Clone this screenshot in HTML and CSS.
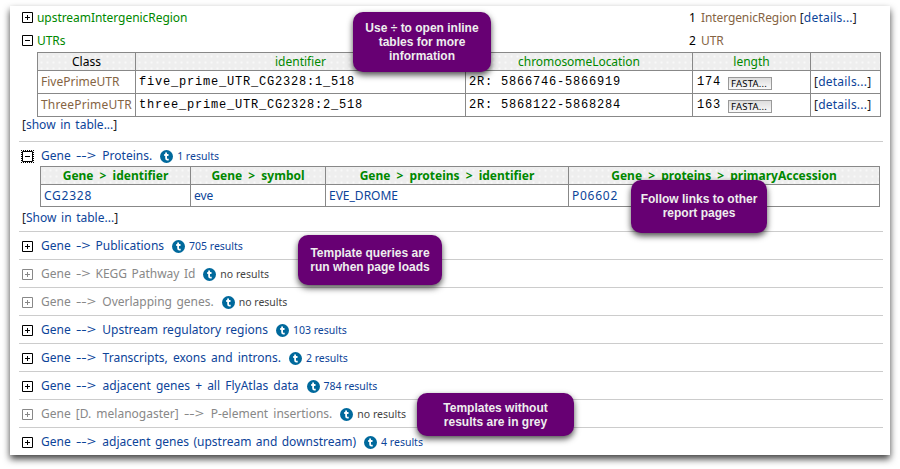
FILE: index.html
```
<!DOCTYPE html>
<html lang="en">
<head>
<meta charset="utf-8">
<title>Gene report</title>
<link rel="stylesheet" href="styles.css">
</head>
<body>
<svg class="defs" width="0" height="0" aria-hidden="true">
  <symbol id="plus" viewBox="0 0 11 11"><path d="M.5.5h10v10H.5zM3 5.5h5M5.5 3v5" fill="none" stroke="currentColor"/></symbol>
  <symbol id="minus" viewBox="0 0 11 11"><path d="M.5.5h10v10H.5zM3 5.5h5" fill="none" stroke="currentColor"/></symbol>
  <symbol id="tmpl" viewBox="0 0 13 13"><circle cx="6.5" cy="6.5" r="6.5" fill="#00699c"/><path d="M6.1 2.6v5.6q0 1.4 1.3 1.4h1.3M4.2 5h4.3" fill="none" stroke="#fff" stroke-width="1.8"/></symbol>
</svg>
<main class="panel">
  <div class="field">
    <svg class="toggle"><use href="#plus"/></svg><span class="name">upstreamIntergenicRegion</span>
    <span class="count">1</span><span class="type">IntergenicRegion</span><span class="link">[<a>details...</a>]</span>
  </div>
  <div class="field second">
    <svg class="toggle"><use href="#minus"/></svg><span class="name">UTRs</span>
    <span class="count">2</span><span class="type">UTR</span>
  </div>
  <table class="utrs">
    <colgroup><col class="c1"><col class="c2"><col class="c3"><col class="c4"><col class="c5"></colgroup>
    <tr><th class="plain">Class</th><th>identifier</th><th class="tight">chromosomeLocation</th><th>length</th><th></th></tr>
    <tr><td class="type">FivePrimeUTR</td><td class="mono">five_prime_UTR_CG2328:1_518</td><td class="mono">2R: 5866746-5866919</td><td class="mono length">174<span class="fasta">FASTA...</span></td><td class="link">[<a>details...</a>]</td></tr>
    <tr><td class="type three">ThreePrimeUTR</td><td class="mono">three_prime_UTR_CG2328:2_518</td><td class="mono">2R: 5868122-5868284</td><td class="mono length">163<span class="fasta">FASTA...</span></td><td class="link">[<a>details...</a>]</td></tr>
  </table>
  <div class="show">[<a>show in table...</a>]</div>

  <section class="templates">
    <div class="template"><svg class="toggle focus"><use href="#minus"/></svg><a class="title">Gene <span class="arrow long">--&gt;</span> Proteins.</a><svg class="badge"><use href="#tmpl"/></svg><span class="results">1 results</span></div>
    <table class="proteins">
      <colgroup><col class="p1"><col class="p2"><col class="p3"><col class="p4"></colgroup>
      <tr><th>Gene &gt; identifier</th><th>Gene &gt; symbol</th><th>Gene &gt; proteins &gt; identifier</th><th>Gene &gt; proteins &gt; primaryAccession</th></tr>
      <tr><td class="code"><a>CG2328</a></td><td><a>eve</a></td><td><a>EVE_DROME</a></td><td class="code"><a>P06602</a></td></tr>
    </table>
    <div class="show lower">[<a>Show in table...</a>]</div>
    <div class="template"><svg class="toggle"><use href="#plus"/></svg><a class="title">Gene <span class="arrow">-&gt;</span> Publications</a><svg class="badge"><use href="#tmpl"/></svg><span class="results">705 results</span></div>
    <div class="template empty"><svg class="toggle"><use href="#plus"/></svg><a class="title">Gene <span class="arrow">-&gt;</span> KEGG Pathway Id</a><svg class="badge"><use href="#tmpl"/></svg><span class="results">no results</span></div>
    <div class="template empty"><svg class="toggle"><use href="#plus"/></svg><a class="title">Gene <span class="arrow long">--&gt;</span> Overlapping genes.</a><svg class="badge"><use href="#tmpl"/></svg><span class="results">no results</span></div>
    <div class="template"><svg class="toggle"><use href="#plus"/></svg><a class="title">Gene <span class="arrow long">--&gt;</span> Upstream regulatory regions</a><svg class="badge"><use href="#tmpl"/></svg><span class="results">103 results</span></div>
    <div class="template"><svg class="toggle"><use href="#plus"/></svg><a class="title wide">Gene <span class="arrow long">--&gt;</span> Transcripts, exons and introns.</a><svg class="badge"><use href="#tmpl"/></svg><span class="results">2 results</span></div>
    <div class="template"><svg class="toggle"><use href="#plus"/></svg><a class="title wide">Gene <span class="arrow long">--&gt;</span> adjacent genes + all FlyAtlas data</a><svg class="badge"><use href="#tmpl"/></svg><span class="results">784 results</span></div>
    <div class="template empty"><svg class="toggle"><use href="#plus"/></svg><a class="title wide">Gene [D. melanogaster] <span class="arrow long">--&gt;</span> P-element insertions.</a><svg class="badge"><use href="#tmpl"/></svg><span class="results">no results</span></div>
    <div class="template"><svg class="toggle"><use href="#plus"/></svg><a class="title">Gene <span class="arrow long">--&gt;</span> adjacent genes (upstream and downstream)</a><svg class="badge"><use href="#tmpl"/></svg><span class="results">4 results</span></div>
  </section>
</main>
<div class="tip tip-open">Use ÷ to open inline<br>tables for more<br>information</div>
<div class="tip tip-links">Follow links to other<br>report pages</div>
<div class="tip tip-run">Template queries are<br>run when page loads</div>
<div class="tip tip-grey">Templates without<br>results are in grey</div>
</body>
</html>
```
FILE: styles.css
```
* { box-sizing: border-box; }
body { margin: 0; height: 469px; padding: 6px 10px 14px; overflow: hidden; background: #fff; font: 12px/16px "Noto Sans", sans-serif; color: #222; }
.defs { position: absolute; }
.panel { height: 449px; background: #fff; box-shadow: 0 4px 7px rgba(0,0,0,.75); }
a { color: #0c4499; }
.toggle { width: 11px; height: 11px; color: #000; flex: none; }
.focus { outline: 1px dotted #000; }
.field { display: flex; align-items: center; height: 23px; padding-left: 12px; white-space: nowrap; }
.name { width: 652px; margin-left: 4px; color: #080; letter-spacing: -.05px; }
.count { width: 12px; color: #000; }
.type { color: #856443; }
.field .type { letter-spacing: -.1px; }
.three { letter-spacing: .18px; }
.link { letter-spacing: .22px; }
.field .link { margin-left: 3px; }
table { border-collapse: collapse; table-layout: fixed; }
th, td { border: 1px solid #888; padding: 0 3px; white-space: nowrap; line-height: 16px; }
th { height: 18px; padding: 0; background: #eee radial-gradient(circle, #f8f8f8 .7px, transparent 1px) 0 0 / 6px 6px; color: #080; font-weight: 400; }
th.plain { color: #000; }
th.tight { letter-spacing: -.05px; }
td { height: 23px; text-align: left; }
.utrs { width: 843px; margin-left: 27px; }
.c1 { width: 98px; } .c2 { width: 330px; } .c3 { width: 227px; } .c4 { width: 118px; } .c5 { width: 70px; }
.mono { font-family: "Liberation Mono", monospace; font-size: 12px; letter-spacing: .8px; color: #000; }
.length { padding: 0 0 0 4px; }
.fasta { display: inline-block; width: 44px; height: 13px; margin-left: 7px; padding-left: 2px; border: 1px solid #999; background: linear-gradient(#ddd, #fafafa); font: 9.5px/11px "Noto Sans", sans-serif; letter-spacing: .2px; vertical-align: -2px; }
.show { height: 24px; padding-left: 12px; word-spacing: 1.5px; }
.templates { margin: 0 7px 0 9px; }
.template { display: flex; align-items: center; height: 28px; padding: 2px 0 0 3px; border-top: 1px solid #ccc; white-space: nowrap; }
.title { margin: 0 0 2px 8px; word-spacing: 1.3px; }
.wide { word-spacing: 2px; }
.arrow { display: inline-block; margin: 0 4px 0 1.2px; transform: scaleX(1.38); transform-origin: left; }
.long { margin-right: 7px; }
.wide .arrow { margin: 0 6.5px 0 .6px; }
.badge { width: 13px; height: 13px; margin: 0 4px 0 8px; flex: none; }
.results { margin-bottom: 1px; font-size: 10.5px; color: #0c4499; }
.empty .toggle, .empty .title { color: #888; }
.empty .results { color: #444; }
.proteins { width: 840px; margin: -3px 0 0 21px; }
.p1 { width: 150px; } .p2 { width: 135px; } .p3 { width: 243px; } .p4 { width: 311px; }
.proteins th { font-weight: 700; word-spacing: 3px; }
.proteins td { height: 22px; }
.code { letter-spacing: .75px; }
.lower { padding: 3px 0 0 3px; }
.tip { position: absolute; display: flex; align-items: center; justify-content: center; border-radius: 10px; background: #670073; color: #eee; box-shadow: 0 3px 6px rgba(0,0,0,.7); font: bold 12px/14px "Liberation Sans", sans-serif; text-align: center; white-space: nowrap; }
.tip-open { left: 353px; top: 12px; width: 138px; height: 60px; }
.tip-links { left: 631px; top: 180px; width: 136px; height: 53px; padding-bottom: 2px; }
.tip-run { left: 298px; top: 235px; width: 144px; height: 50px; }
.tip-grey { left: 417px; top: 393px; width: 157px; height: 43px; }
```
